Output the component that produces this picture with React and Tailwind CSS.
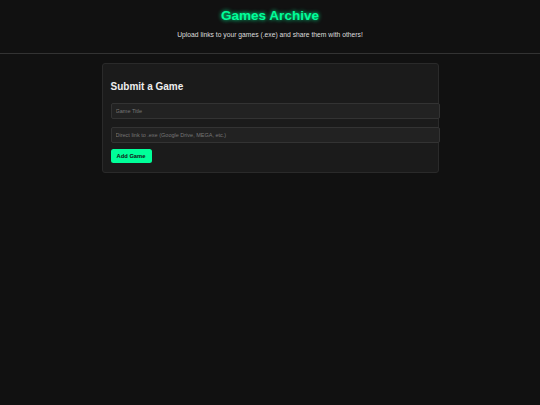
export default function App() {
  return (
    <div
      className="min-h-[405px] bg-[#111111] text-[#eeeeee]"
      style={{ fontFamily: '"Liberation Sans", Arial, sans-serif' }}
    >
      <header className="border-b border-[#333333] pt-[8px] pb-[14px] text-center">
        <h1 className="text-[13.5px] font-bold leading-[16px] text-[#00ff99] [text-shadow:0_0_4px_#00ff99]">
          Games Archive
        </h1>
        <p className="mt-[7px] text-[6.75px] leading-[8px] text-[#dddddd]">
          Upload links to your games (.exe) and share them with others!
        </p>
      </header>

      <main className="flex justify-center pt-[9px]">
        <div className="w-[337px] rounded-[3px] border border-[#2a2a2a] bg-[#1b1b1b] px-[8px] pt-[17px] pb-[9px]">
          <h2 className="text-[10px] font-bold leading-[12px] text-[#eeeeee]">Submit a Game</h2>
          <div className="mt-[10px] flex flex-col gap-[8px]">
            <input
              className="h-[16px] w-[329px] rounded-[2px] border border-[#333333] bg-[#222222] px-[4px] text-[5.5px] text-[#dddddd] outline-none placeholder:text-[#777777]"
              placeholder="Game Title"
            />
            <input
              className="h-[16px] w-[329px] rounded-[2px] border border-[#333333] bg-[#222222] px-[4px] text-[5.5px] text-[#dddddd] outline-none placeholder:text-[#777777]"
              placeholder="Direct link to .exe (Google Drive, MEGA, etc.)"
            />
          </div>
          <button className="mt-[6px] block h-[14px] w-[41px] rounded-[2.5px] bg-[#00ff99] text-[5.75px] font-bold text-[#111111]">
            Add Game
          </button>
        </div>
      </main>
    </div>
  );
}
